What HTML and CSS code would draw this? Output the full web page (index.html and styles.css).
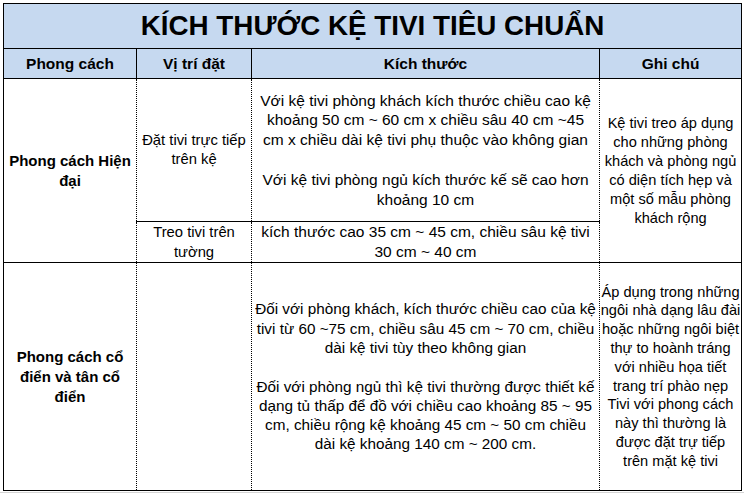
FILE: index.html
```html
<!DOCTYPE html>
<html lang="vi">
<head>
<meta charset="utf-8">
<title>Kích thước kệ tivi tiêu chuẩn</title>
<link rel="stylesheet" href="styles.css">
</head>
<body>
<table class="sheet">
  <colgroup>
    <col class="c1">
    <col class="c2">
    <col class="c3">
    <col class="c4">
  </colgroup>
  <tr class="r-title">
    <th colspan="4" class="title">KÍCH THƯỚC KỆ TIVI TIÊU CHUẨN</th>
  </tr>
  <tr class="r-head">
    <th class="head">Phong cách</th>
    <th class="head">Vị trí đặt</th>
    <th class="head">Kích thước</th>
    <th class="head">Ghi chú</th>
  </tr>
  <tr class="r-1a">
    <td rowspan="2" class="style">Phong cách Hiện<br>đại</td>
    <td class="pos">Đặt tivi trực tiếp<br>trên kệ</td>
    <td class="size l20">Với kệ tivi phòng khách kích thước chiều cao kệ<br>khoảng 50 cm ~ 60 cm x chiều sâu 40 cm ~45<br>cm x chiều dài kệ tivi phụ thuộc vào không gian<br><br>Với kệ tivi phòng ngủ kích thước kế sẽ cao hơn<br>khoảng 10 cm</td>
    <td rowspan="2" class="note">Kệ tivi treo áp dụng<br>cho những phòng<br>khách và phòng ngủ<br>có diện tích hẹp và<br>một số mẫu phòng<br>khách rộng</td>
  </tr>
  <tr class="r-1b">
    <td class="pos split">Treo tivi trên<br>tường</td>
    <td class="size split">kích thước cao 35 cm ~ 45 cm, chiều sâu kệ tivi<br>30 cm ~ 40 cm</td>
  </tr>
  <tr class="r-2">
    <td class="style">Phong cách cổ<br>điển và tân cổ<br>điển</td>
    <td class="pos"></td>
    <td class="size s2">Đối với phòng khách, kích thước chiều cao của kệ<br>tivi từ 60 ~75 cm, chiều sâu 45 cm ~ 70 cm, chiều<br>dài kệ tivi tùy theo không gian<br><br>Đối với phòng ngủ thì kệ tivi thường được thiết kế<br>dạng tủ thấp để đồ với chiều cao khoảng 85 ~ 95<br>cm, chiều rộng kệ khoảng 45 cm ~ 50 cm chiều<br>dài kệ khoảng 140 cm ~ 200 cm.</td>
    <td class="note tight">Áp dụng trong những<br>ngôi nhà dạng lâu đài<br>hoặc những ngôi biệt<br>thự to hoành tráng<br>với nhiều họa tiết<br>trang trí phào nẹp<br>Tivi với phong cách<br>này thì thường là<br>được đặt trự tiếp<br>trên mặt kệ tivi</td>
  </tr>
</table>
<div class="gridline"></div>
</body>
</html>
```

FILE: styles.css
```css
html, body {
  margin: 0;
  padding: 0;
  background: #ffffff;
}

body {
  padding: 3px 0 0 3px;
  font-family: "Liberation Sans", Arial, sans-serif;
  color: #000;
}

.sheet {
  border-collapse: collapse;
  table-layout: fixed;
  width: 739px;
  border: 1px solid #000;
}

.c1 { width: 133px; }
.c2 { width: 115px; }
.c3 { width: 348px; }
.c4 { width: 142px; }

.sheet th,
.sheet td {
  padding: 0;
  text-align: center;
  vertical-align: middle;
  white-space: nowrap;
  overflow: visible;
}

.r-title { height: 45px; }
.r-head { height: 30px; }
.r-1a { height: 143px; }
.r-1b { height: 40px; }
.r-2 { height: 228px; }

.title {
  background: #c6d9f0;
  font-size: 27.8px;
  font-weight: bold;
  border-bottom: 1px solid #000;
}

.head {
  background: #c6d9f0;
  font-size: 15.5px;
  font-weight: bold;
  border-right: 1px solid #000;
  border-bottom: 1px solid #000;
}

.style {
  font-size: 15px;
  font-weight: bold;
  line-height: 20px;
  border-right: 1px dotted #000;
  border-bottom: 1px solid #000;
}

.pos {
  font-size: 14.8px;
  line-height: 19px;
}

.note {
  font-size: 14.6px;
  line-height: 19px;
}

.size {
  font-size: 15.5px;
  line-height: 19px;
}

.s2 {
  font-size: 15.3px;
  line-height: 19.3px;
}

.pos,
.size {
  border-right: 1px dotted #000;
}

.l20 { line-height: 19.8px; }
.tight { line-height: 18.8px; }

.split {
  border-top: 1px solid #000;
  line-height: 20px;
}

.r-1b td,
.r-1a .note,
.r-1a .style {
  border-bottom: 1px solid #000;
}

.gridline {
  margin: 1px 0 0 -3px;
  height: 1px;
  background: #d4d4d4;
}
```
